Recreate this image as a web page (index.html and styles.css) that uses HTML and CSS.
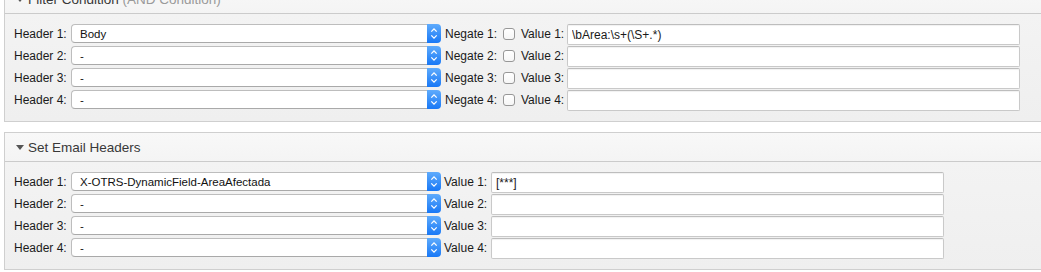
FILE: index.html
```html
<!DOCTYPE html>
<html lang="en">
  <head>
    <meta charset="UTF-8" />
    <title>Filter Condition</title>
    <link rel="stylesheet" href="styles.css">
  </head>

  <body>
    <div class="page">
      <!-- Filter Condition -->
      <div class="widget widget-first">
        <div class="widget-header">
          <span class="toggle"></span>
          <h2>Filter Condition <span class="hint">(AND Condition)</span></h2>
        </div>
        <div class="widget-content">
          <div class="field-row">
            <label class="field-label">Header 1:</label>
            <div class="select">
              <span class="select-value">Body</span>
              <span class="select-arrow"><svg width="14" height="19" viewBox="0 0 14 19"><polyline points="4.3,7.6 7,4.9 9.7,7.6" /><polyline points="4.3,11.4 7,14.1 9.7,11.4" /></svg></span>
            </div>
            <label class="negate-label">Negate 1:</label>
            <span class="checkbox"></span>
            <label class="value-label">Value 1:</label>
            <input class="text-input" type="text" value="\bArea:\s+(\S+.*)" readonly />
          </div>
          <div class="field-row">
            <label class="field-label">Header 2:</label>
            <div class="select">
              <span class="select-value">-</span>
              <span class="select-arrow"><svg width="14" height="19" viewBox="0 0 14 19"><polyline points="4.3,7.6 7,4.9 9.7,7.6" /><polyline points="4.3,11.4 7,14.1 9.7,11.4" /></svg></span>
            </div>
            <label class="negate-label">Negate 2:</label>
            <span class="checkbox"></span>
            <label class="value-label">Value 2:</label>
            <input class="text-input" type="text" value="" readonly />
          </div>
          <div class="field-row">
            <label class="field-label">Header 3:</label>
            <div class="select">
              <span class="select-value">-</span>
              <span class="select-arrow"><svg width="14" height="19" viewBox="0 0 14 19"><polyline points="4.3,7.6 7,4.9 9.7,7.6" /><polyline points="4.3,11.4 7,14.1 9.7,11.4" /></svg></span>
            </div>
            <label class="negate-label">Negate 3:</label>
            <span class="checkbox"></span>
            <label class="value-label">Value 3:</label>
            <input class="text-input" type="text" value="" readonly />
          </div>
          <div class="field-row">
            <label class="field-label">Header 4:</label>
            <div class="select">
              <span class="select-value">-</span>
              <span class="select-arrow"><svg width="14" height="19" viewBox="0 0 14 19"><polyline points="4.3,7.6 7,4.9 9.7,7.6" /><polyline points="4.3,11.4 7,14.1 9.7,11.4" /></svg></span>
            </div>
            <label class="negate-label">Negate 4:</label>
            <span class="checkbox"></span>
            <label class="value-label">Value 4:</label>
            <input class="text-input" type="text" value="" readonly />
          </div>
        </div>
      </div>

      <!-- Set Email Headers -->
      <div class="widget">
        <div class="widget-header">
          <span class="toggle"></span>
          <h2>Set Email Headers</h2>
        </div>
        <div class="widget-content">
          <div class="field-row">
            <label class="field-label">Header 1:</label>
            <div class="select">
              <span class="select-value">X-OTRS-DynamicField-AreaAfectada</span>
              <span class="select-arrow"><svg width="14" height="19" viewBox="0 0 14 19"><polyline points="4.3,7.6 7,4.9 9.7,7.6" /><polyline points="4.3,11.4 7,14.1 9.7,11.4" /></svg></span>
            </div>
            <label class="value-label value-label-set">Value 1:</label>
            <input class="text-input" type="text" value="[***]" readonly />
          </div>
          <div class="field-row">
            <label class="field-label">Header 2:</label>
            <div class="select">
              <span class="select-value">-</span>
              <span class="select-arrow"><svg width="14" height="19" viewBox="0 0 14 19"><polyline points="4.3,7.6 7,4.9 9.7,7.6" /><polyline points="4.3,11.4 7,14.1 9.7,11.4" /></svg></span>
            </div>
            <label class="value-label value-label-set">Value 2:</label>
            <input class="text-input" type="text" value="" readonly />
          </div>
          <div class="field-row">
            <label class="field-label">Header 3:</label>
            <div class="select">
              <span class="select-value">-</span>
              <span class="select-arrow"><svg width="14" height="19" viewBox="0 0 14 19"><polyline points="4.3,7.6 7,4.9 9.7,7.6" /><polyline points="4.3,11.4 7,14.1 9.7,11.4" /></svg></span>
            </div>
            <label class="value-label value-label-set">Value 3:</label>
            <input class="text-input" type="text" value="" readonly />
          </div>
          <div class="field-row">
            <label class="field-label">Header 4:</label>
            <div class="select">
              <span class="select-value">-</span>
              <span class="select-arrow"><svg width="14" height="19" viewBox="0 0 14 19"><polyline points="4.3,7.6 7,4.9 9.7,7.6" /><polyline points="4.3,11.4 7,14.1 9.7,11.4" /></svg></span>
            </div>
            <label class="value-label value-label-set">Value 4:</label>
            <input class="text-input" type="text" value="" readonly />
          </div>
        </div>
      </div>
    </div>
  </body>
</html>
```

FILE: styles.css
```css
/* General Styles */

html,
body {
  overflow: hidden;
}

body {
  font-family: "Liberation Sans", Arial, Helvetica, sans-serif;
  font-size: 12px;
  color: #1a1a1a;
  margin: 0;
  padding: 0;
  background-color: #fff;
}

.page {
  padding-left: 4px;
}
/* Widget boxes */

.widget {
  border: 1px solid #cfcfcf;
  margin: 0 -20px 10px 0;
  background: #f1f1f1;
}

.widget-first {
  margin-top: -16px;
}

.widget-header {
  display: flex;
  align-items: center;
  height: 28px;
  padding-left: 11px;
  background: linear-gradient(#f8f8f8, #f4f4f4);
  border-bottom: 1px solid #cbcbcb;
}

.toggle {
  width: 0;
  height: 0;
  border-left: 4.5px solid transparent;
  border-right: 4.5px solid transparent;
  border-top: 5px solid #555;
  margin-right: 4px;
}

.widget-header h2 {
  margin: 0;
  font-size: 13.5px;
  font-weight: normal;
  color: #383838;
}

.hint {
  color: #9a9a9a;
}

.widget-content {
  padding: 9px 0 10px 9px;
  background: linear-gradient(#f3f3f3, #efefef);
}
/* Form rows */

.field-row {
  display: flex;
  align-items: center;
  height: 22px;
}

.field-label {
  width: 57px;
  white-space: nowrap;
}

.select {
  display: flex;
  align-items: stretch;
  width: 370px;
  height: 19px;
  box-sizing: border-box;
  margin-bottom: 1px;
}

.select-value {
  flex: 1;
  display: flex;
  align-items: center;
  padding-left: 8px;
  font-size: 11.5px;
  color: #111;
  background: #fff;
  border: 1px solid #bdbdbd;
  border-bottom-color: #a9a9a9;
  border-right: none;
  border-radius: 4px 0 0 4px;
}

.select-arrow {
  width: 14px;
  background: linear-gradient(#5fabfc, #1878f6);
  border-radius: 0 4px 4px 0;
}

.select-arrow svg {
  display: block;
}

.select-arrow polyline {
  fill: none;
  stroke: #fff;
  stroke-width: 1.3;
}

.negate-label {
  width: 58px;
  margin-left: 4px;
  white-space: nowrap;
}

.checkbox {
  width: 12px;
  height: 12px;
  box-sizing: border-box;
  border: 1px solid #979797;
  border-radius: 3px;
  background: linear-gradient(#fff, #f6f6f6);
  margin-right: 6px;
}

.value-label {
  width: 46px;
  white-space: nowrap;
}

.value-label-set {
  width: 47px;
  margin-left: 3px;
}

.text-input {
  width: 453px;
  height: 21px;
  box-sizing: border-box;
  margin: 1px 0 0 0;
  padding: 0 4px;
  font-family: "Liberation Sans", Arial, Helvetica, sans-serif;
  font-size: 12px;
  color: #1a1a1a;
  background: #fff;
  border: 1px solid #c9c9c9;
  border-top-color: #bdbdbd;
  border-radius: 2px;
  box-shadow: inset 0 1px 1px rgba(0, 0, 0, 0.06);
  outline: none;
}
```
